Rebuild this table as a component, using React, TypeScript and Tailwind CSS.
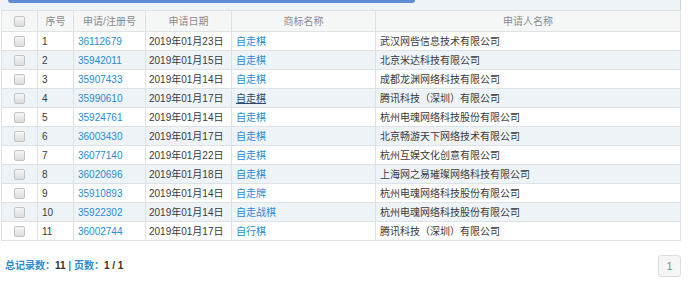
import React from "react";

const rows = [
  ["1", "36112679", "2019年01月23日", "自走棋", "武汉网呰信息技术有限公司"],
  ["2", "35942011", "2019年01月15日", "自走棋", "北京米达科技有限公司"],
  ["3", "35907433", "2019年01月14日", "自走棋", "成都龙渊网络科技有限公司"],
  ["4", "35990610", "2019年01月17日", "自走棋", "腾讯科技（深圳）有限公司"],
  ["5", "35924761", "2019年01月14日", "自走棋", "杭州电魂网络科技股份有限公司"],
  ["6", "36003430", "2019年01月17日", "自走棋", "北京畅游天下网络技术有限公司"],
  ["7", "36077140", "2019年01月22日", "自走棋", "杭州互娱文化创意有限公司"],
  ["8", "36020696", "2019年01月18日", "自走棋", "上海网之易璀璨网络科技有限公司"],
  ["9", "35910893", "2019年01月14日", "自走牌", "杭州电魂网络科技股份有限公司"],
  ["10", "35922302", "2019年01月14日", "自走战棋", "杭州电魂网络科技股份有限公司"],
  ["11", "36002744", "2019年01月17日", "自行棋", "腾讯科技（深圳）有限公司"],
];

const font = { fontFamily: '"Liberation Sans", "Noto Sans CJK SC", sans-serif' };

function Box() {
  return (
    <span className="inline-block w-[11px] h-[11px] rounded-[2px] border border-[#c4c4c4] bg-gradient-to-b from-[#f6f6f6] to-[#dcdcdc] align-middle" />
  );
}

export default function App() {
  return (
    <div className="w-[690px] h-[289px] bg-white text-[10px] text-[#3a3a3a]" style={font}>
      <div className="w-[681px] h-[10px] bg-[#eef3f8] border-r border-[#d0d0d0] relative">
        <div className="ml-[8px] w-[407px] h-[3px] bg-[#5f8dd3] rounded-b-[3px]" />
      </div>
      <table className="ml-[1px] w-[680px] border-collapse table-fixed">
        <colgroup>
          <col className="w-[36px]" />
          <col className="w-[36px]" />
          <col className="w-[72px]" />
          <col className="w-[86px]" />
          <col className="w-[144px]" />
          <col />
        </colgroup>
        <thead>
          <tr className="h-[21px] bg-[#f5f7f7] text-[#8a8a8a]">
            <th className="border border-[#dde2e6] font-normal"><Box /></th>
            <th className="border border-[#dde2e6] font-normal">序号</th>
            <th className="border border-[#dde2e6] font-normal">申请/注册号</th>
            <th className="border border-[#dde2e6] font-normal">申请日期</th>
            <th className="border border-[#dde2e6] font-normal">商标名称</th>
            <th className="border border-[#dde2e6] font-normal">申请人名称</th>
          </tr>
        </thead>
        <tbody>
          {rows.map((r, i) => (
            <tr key={i} className={`h-[19px] ${i % 2 === 1 ? "bg-[#eef3f8]" : "bg-white"}`}>
              <td className="border border-[#dde2e6] text-center leading-none"><Box /></td>
              <td className="border border-[#dde2e6] pl-[4px]">{r[0]}</td>
              <td className="border border-[#dde2e6] pl-[4px] text-[#2a8bd2]">{r[1]}</td>
              <td className="border border-[#dde2e6] pl-[3px]">{r[2]}</td>
              <td className="border border-[#dde2e6] pl-[4px]">
                {i === 3 ? (
                  <span className="text-[#2b4a6b] underline">{r[3]}</span>
                ) : (
                  <span className="text-[#2a8bd2]">{r[3]}</span>
                )}
              </td>
              <td className="border border-[#dde2e6] pl-[4px]">{r[4]}</td>
            </tr>
          ))}
        </tbody>
      </table>
      <div className="flex items-start justify-between w-[681px] mt-[14px]">
        <div className="pl-[5px] mt-[3px] text-[10px] text-[#2a8bd2] font-bold">
          总记录数：<span className="text-[#333]">11</span> | 页数：<span className="text-[#333]">1 / 1</span>
        </div>
        <div className="w-[23px] h-[22px] rounded-[3px] border border-[#ddd] bg-[#f5f5f5] text-[#888] flex items-center justify-center text-[11px]">
          1
        </div>
      </div>
    </div>
  );
}
